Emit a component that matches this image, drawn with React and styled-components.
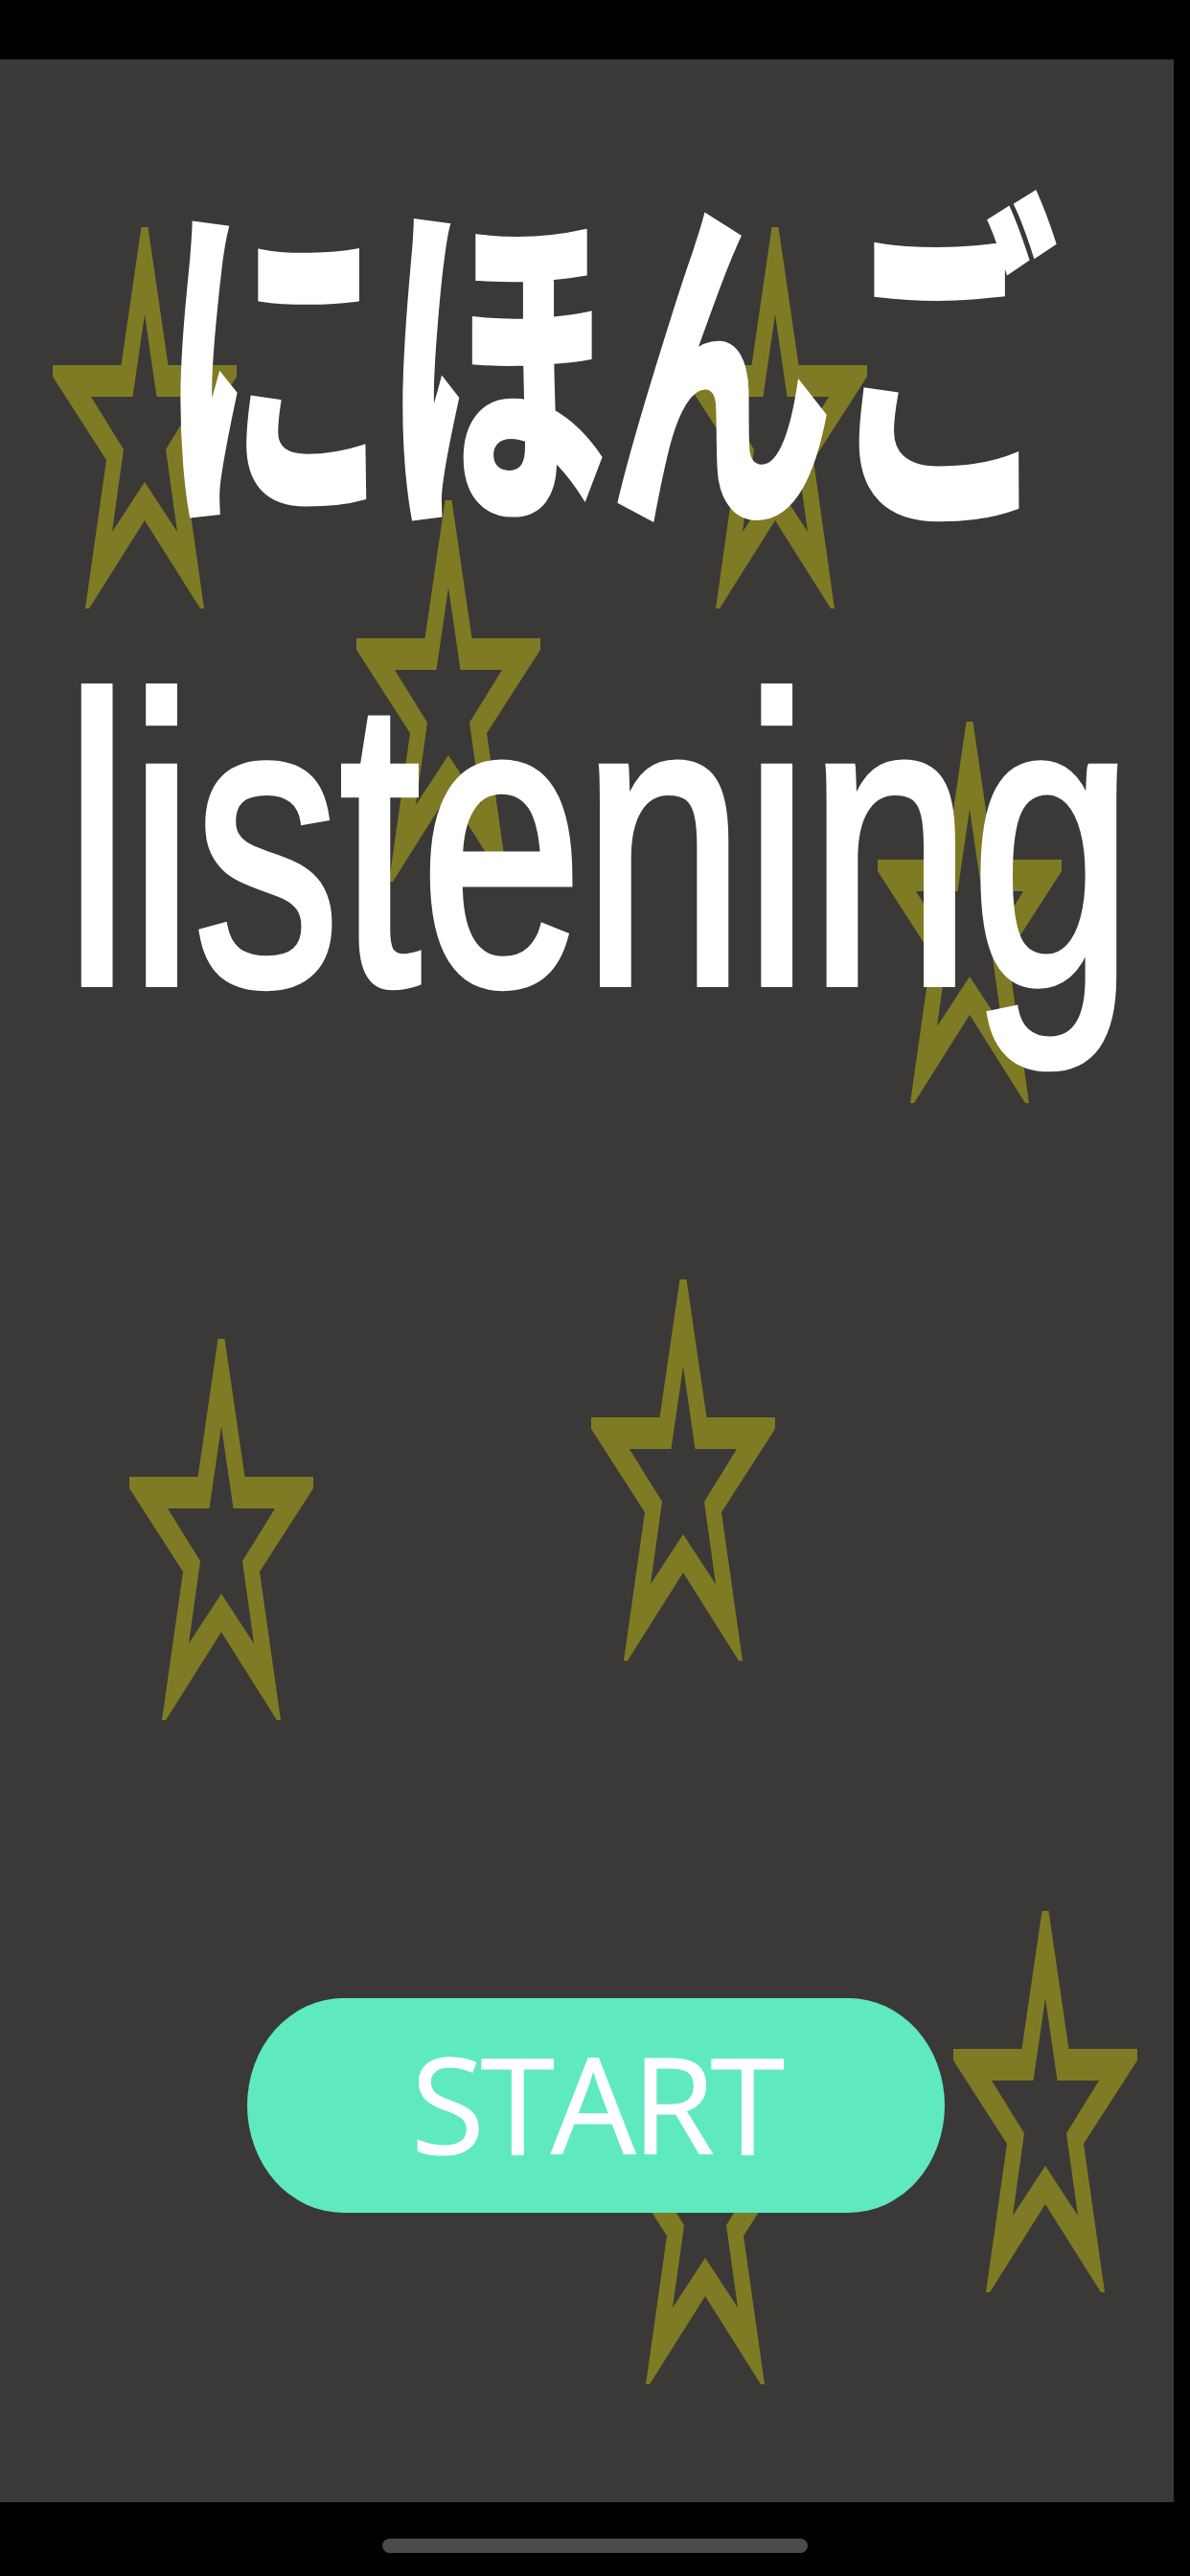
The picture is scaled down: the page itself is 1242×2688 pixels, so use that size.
import React from "react";
import styled, { createGlobalStyle } from "styled-components";

const GlobalStyle = createGlobalStyle`
  html, body {
    margin: 0;
    padding: 0;
    background: #000;
  }
  #root {
    width: 1242px;
  }
`;

const Screen = styled.div`
  width: 1242px;
  height: 2688px;
  background: #000;
  display: flex;
  flex-direction: column;
  overflow: hidden;
`;

const StatusBar = styled.div`
  height: 62px;
  flex-shrink: 0;
`;

const Stage = styled.main`
  position: relative;
  flex: 1;
  margin-right: 17px;
  background: #3a3937;
  display: flex;
  flex-direction: column;
  align-items: center;
  overflow: hidden;
`;

const StarMark = styled.svg`
  position: absolute;
  left: ${(p) => p.$x}px;
  top: ${(p) => p.$y}px;
  width: 192px;
  height: 398px;
  z-index: 0;
`;

const JapaneseTitle = styled.h1`
  position: relative;
  z-index: 1;
  margin: 182px 0 0;
  padding-left: 45px;
  height: 236px;
  font: 700 234px/1 "Noto Sans CJK JP", sans-serif;
  color: #fff;
  -webkit-text-stroke: 5px #fff;
  white-space: nowrap;
  transform: scaleY(1.57);
`;

const EnglishTitle = styled.p`
  position: relative;
  z-index: 1;
  margin: 186px 0 0;
  padding-left: 25px;
  height: 306px;
  font: 400 304px/1 "Liberation Sans", Arial, sans-serif;
  color: #fff;
  -webkit-text-stroke: 6px #fff;
  white-space: nowrap;
  transform: scaleY(1.4);
  transform-origin: 50% 0;
`;

const StartButton = styled.button`
  position: relative;
  z-index: 1;
  margin: auto 0 302px 19px;
  width: 728px;
  height: 224px;
  padding: 0 0 6px;
  border: none;
  border-radius: 100px / 112px;
  background: #5fe9c1;
  color: #fff;
  font: 400 140px/1 "Open Sans", sans-serif;
  letter-spacing: -4px;
  -webkit-text-stroke: 1px #fff;
`;

const HomeBar = styled.div`
  height: 77px;
  flex-shrink: 0;
  box-sizing: border-box;
  padding-top: 38px;
  display: flex;
  justify-content: center;
`;

const HomeIndicator = styled.div`
  width: 444px;
  height: 15px;
  border-radius: 8px;
  background: #4a4a4a;
`;

// scattered outline stars, top-left corners in stage coords
const stars = [
  { x: 55, y: 175 },
  { x: 713, y: 175 },
  { x: 372, y: 460 },
  { x: 916, y: 691 },
  { x: 135, y: 1335 },
  { x: 617, y: 1273 },
  { x: 995, y: 1932 },
  { x: 640, y: 2028 },
];

const STAR_PATH =
  "M92.5 0 L99.5 0 L120.5 144 L192 144 L192 156 L136 243 L158 398 L154 398 L96 306 L38 398 L34 398 L56 243 L0 156 L0 144 L71.5 144 Z " +
  "M96 91 L108.5 177 L152 177 L118 232 L130 318 L96 266 L62 318 L74 232 L40 177 L83.5 177 Z";

const Star = ({ x, y }) => (
  <StarMark $x={x} $y={y} viewBox="0 0 192 398" preserveAspectRatio="none">
    <path d={STAR_PATH} fill="#7e7b24" fillRule="evenodd" />
  </StarMark>
);

const App = () => {
  return (
    <>
      <GlobalStyle />
      <Screen>
        <StatusBar />
        <Stage>
          {stars.map((s, i) => (
            <Star key={i} x={s.x} y={s.y} />
          ))}
          <JapaneseTitle>にほんご</JapaneseTitle>
          <EnglishTitle>listening</EnglishTitle>
          <StartButton>START</StartButton>
        </Stage>
        <HomeBar>
          <HomeIndicator />
        </HomeBar>
      </Screen>
    </>
  );
};

export default App;
